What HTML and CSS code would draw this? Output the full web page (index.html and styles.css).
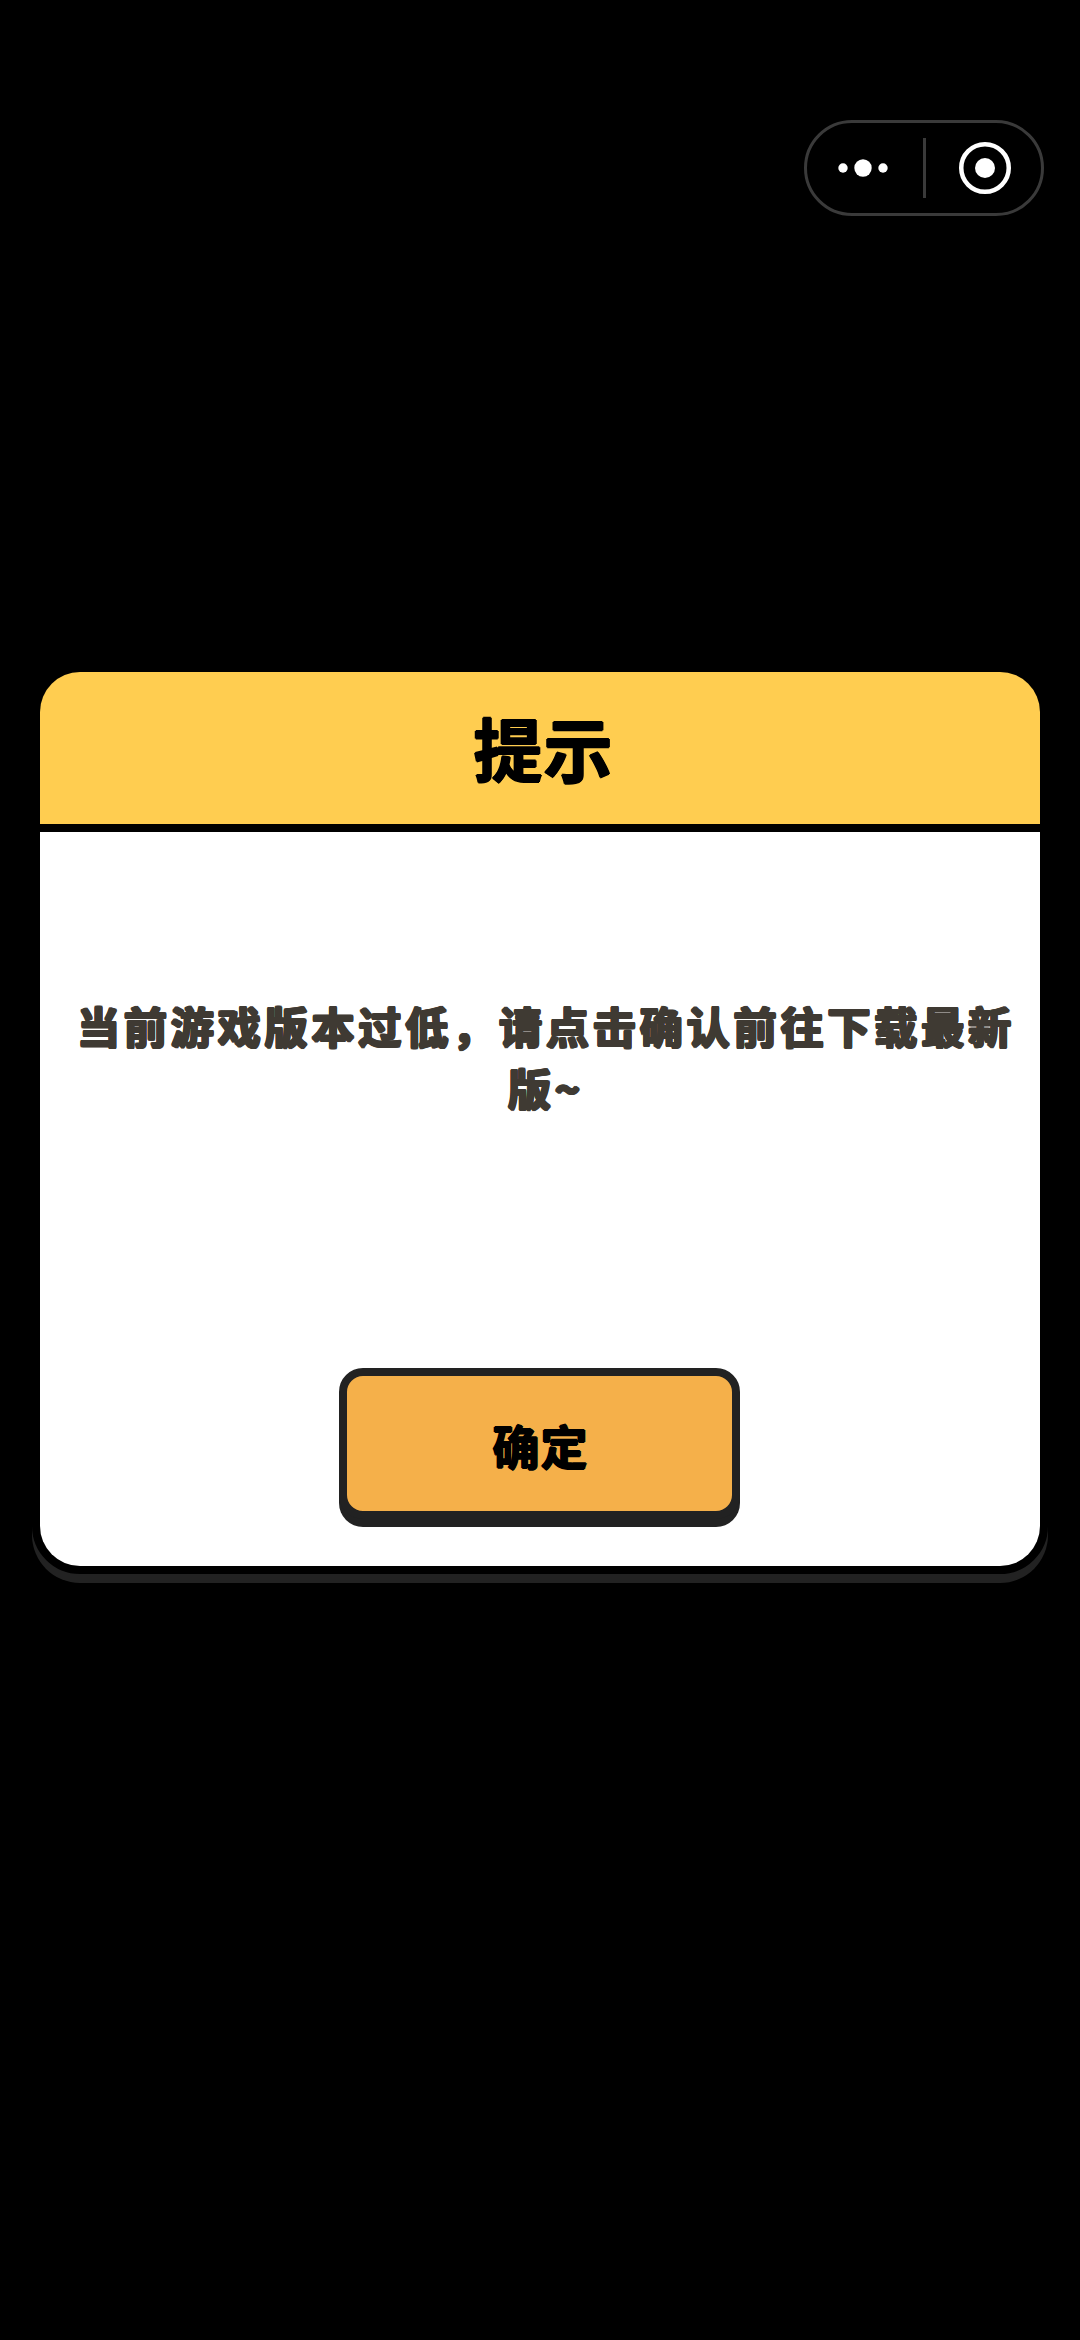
FILE: index.html
```html
<!DOCTYPE html>
<html lang="zh-CN">
<head>
    <meta charset="UTF-8">
    <meta name="viewport" content="width=device-width, initial-scale=1.0">
    <title>提示</title>
    <link rel="stylesheet" href="styles.css">
</head>
<body>
    <div class="page">
        <div class="capsule">
            <div class="capsule-side">
                <svg class="icon-more" width="50" height="20" viewBox="0 0 50 20">
                    <circle cx="5" cy="10" r="4.7" fill="#fff"/>
                    <circle cx="25" cy="10" r="8.7" fill="#fff"/>
                    <circle cx="45" cy="10" r="4.7" fill="#fff"/>
                </svg>
            </div>
            <div class="capsule-line"></div>
            <div class="capsule-side">
                <svg class="icon-close" width="54" height="54" viewBox="0 0 54 54">
                    <circle cx="27" cy="27" r="23.75" fill="none" stroke="#fff" stroke-width="4.5"/>
                    <circle cx="27" cy="27" r="10" fill="#fff"/>
                </svg>
            </div>
        </div>

        <div class="dialog">
            <div class="dialog-title">提示</div>
            <div class="dialog-body">
                <div class="dialog-message">当前游戏版本过低，请点击确认前往下载最新版~</div>
                <div class="dialog-btn">确定</div>
            </div>
        </div>
    </div>
</body>
</html>
```

FILE: styles.css
```css
/* Page */
body {
    margin: 0;
    background: #000;
    font-family: "Noto Sans CJK SC", "Noto Sans", sans-serif;
}

.page {
    height: 2340px;
    box-sizing: border-box;
    padding: 120px 32px 0;
    display: flex;
    flex-direction: column;
}

/* Mini program capsule */
.capsule {
    align-self: flex-end;
    width: 240px;
    height: 96px;
    margin-right: 4px;
    box-sizing: border-box;
    border: 3px solid #3a3a3a;
    border-radius: 48px;
    display: flex;
    align-items: center;
}

.capsule-side {
    flex: 1;
    display: flex;
    justify-content: center;
    align-items: center;
}

.capsule-line {
    width: 3px;
    height: 60px;
    background: #3a3a3a;
}

.icon-more {
    margin-right: 4px;
}

.icon-close {
    margin-left: 4px;
}

/* Dialog */
.dialog {
    margin-top: 448px;
    border: 8px solid #000;
    border-radius: 48px;
    box-shadow: 0 9px 0 #222;
    overflow: hidden;
    background: #000;
}

.dialog-title {
    height: 152px;
    margin-bottom: 8px;
    padding-left: 7px;
    background: #ffcd50;
    color: #000;
    font-size: 69px;
    font-weight: 700;
    letter-spacing: 1px;
    line-height: 150px;
    text-align: center;
    text-shadow: 1px 0 #000, -1px 0 #000, 0 1px #000, 0 -1px #000;
}

.dialog-body {
    height: 734px;
    box-sizing: border-box;
    padding: 162px 0 47px;
    background: #fff;
    display: flex;
    flex-direction: column;
    align-items: center;
}

.dialog-message {
    width: 944px;
    margin-left: 12px;
    flex: 1;
    color: #3f3a33;
    font-size: 43px;
    font-weight: 700;
    line-height: 62px;
    letter-spacing: 3.9px;
    text-align: center;
    text-shadow: 1.3px 0 #3f3a33, -1.3px 0 #3f3a33, 0 1.3px #3f3a33, 0 -1.3px #3f3a33,
        1px 1px #3f3a33, -1px 1px #3f3a33, 1px -1px #3f3a33, -1px -1px #3f3a33;
}

.dialog-btn {
    width: 401px;
    height: 151px;
    margin-left: -1px;
    padding-left: 2px;
    box-sizing: border-box;
    border: 8px solid #222;
    border-radius: 24px;
    box-shadow: 0 8px 0 #222;
    background: #f5b04a;
    color: #000;
    font-size: 47px;
    font-weight: 700;
    letter-spacing: 1px;
    line-height: 137px;
    text-align: center;
    text-shadow: 1px 0 #000, -1px 0 #000, 0 1px #000, 0 -1px #000;
}
```
